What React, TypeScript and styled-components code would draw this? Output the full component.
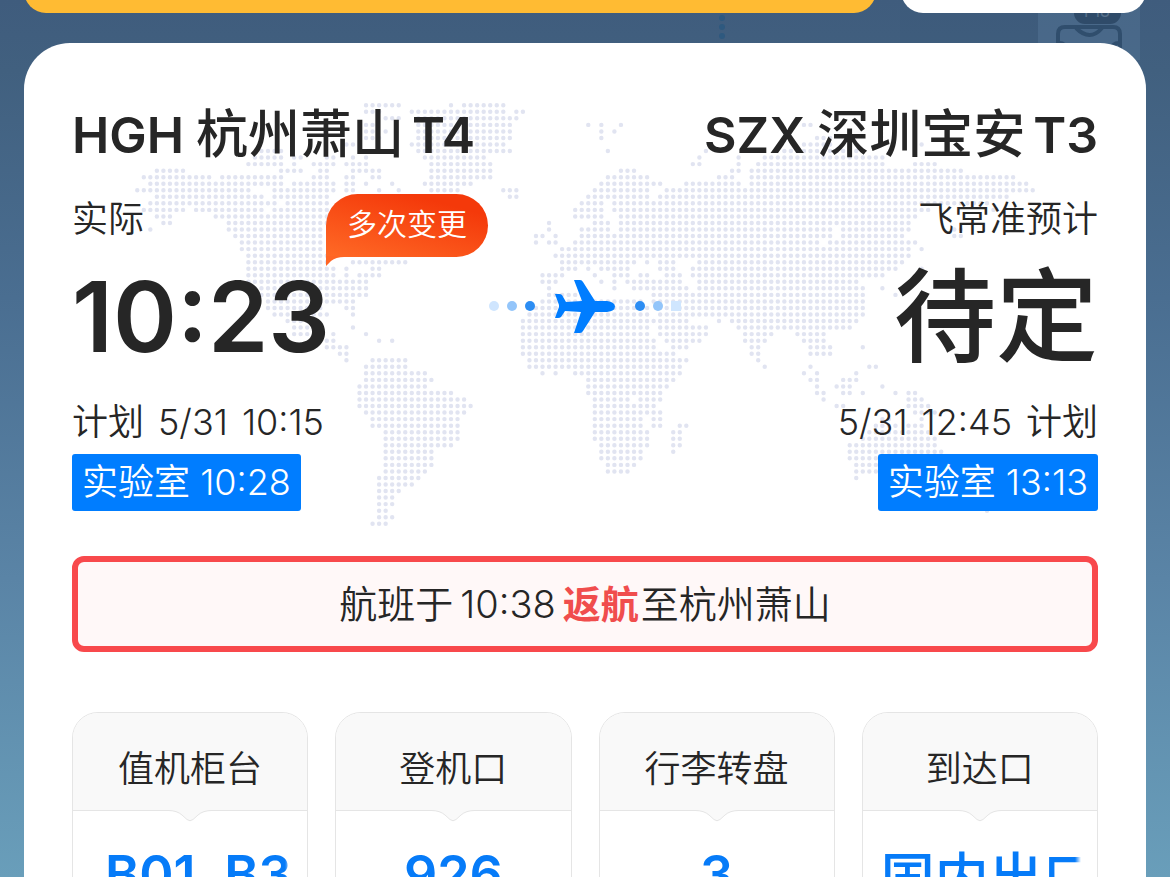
import React from "react";
import styled, { createGlobalStyle } from "styled-components";

const GlobalStyle = createGlobalStyle`
  * { box-sizing: border-box; }
  body {
    margin: 0;
    font-family: Inter, "Noto Sans CJK SC", sans-serif;
    color: #262626;
    background: #6699b8;
  }
`;

const Page = styled.main`
  position: relative;
  display: flex;
  flex-direction: column;
  height: 100vh;
  overflow: hidden;
  padding: 0 24px;
  background: linear-gradient(#3f5c7d 0%, #41607f 8%, #4a6e91 34%, #5a84a6 66%, #699eba 100%);
`;

const Backdrop = styled.svg`
  position: absolute;
  top: 0;
  right: 0;
`;

const TopBars = styled.div`
  position: relative;
  display: flex;
  align-items: flex-end;
  gap: 25px;
  height: 13px;
  flex: none;
  overflow: hidden;
`;

const Bar = styled.div<{ $grow: number; $color: string }>`
  flex: ${(p) => p.$grow} 1 0;
  height: 60px;
  border-radius: 22px;
  background: ${(p) => p.$color};
`;

const Card = styled.section`
  position: relative;
  flex: 1 0 auto;
  margin-top: 30px;
  padding: 60px 48px 0;
  border-radius: 46px 46px 0 0;
  background: #fff;
`;

const DotMap = styled.svg`
  position: absolute;
  top: 59px;
  left: 0;
  right: 0;
  margin: 0 auto;
  width: 902px;
  height: 425px;
  fill: #e1e4f1;
`;

const Route = styled.div`
  position: relative;
  display: flex;
  justify-content: space-between;
`;

const Stop = styled.div<{ $end?: boolean }>`
  display: flex;
  flex-direction: column;
  align-items: ${(p) => (p.$end ? "flex-end" : "flex-start")};
`;

const Airport = styled.h2`
  display: flex;
  align-items: baseline;
  gap: 12px;
  margin: 0;
  font-size: 52px;
  line-height: 64px;
  font-weight: 500;
`;

const Code = styled.span`
  font-size: 50px;
  font-weight: 600;
`;

const Place = styled.span`
  display: flex;
  align-items: baseline;
  gap: 8px;
`;

const Caption = styled.p`
  display: flex;
  gap: 14px;
  margin: 0;
  font-size: 36px;
  line-height: 56px;
  font-weight: 350;
`;

const StatusRow = styled.div`
  margin-top: 24px;
`;

const Time = styled.p`
  margin: 0;
  height: 147px;
  font-size: 97px;
  line-height: 140px;
  font-weight: 600;

  &:lang(zh) {
    font-size: 102px;
    font-weight: 500;
  }
`;

const Lab = styled.span`
  margin-top: 4px;
  padding: 0 10px;
  border-radius: 3px;
  background: #007dff;
  color: #fff;
  font-size: 36px;
  line-height: 57px;
  font-weight: 350;
`;

const Badge = styled.span`
  position: absolute;
  top: 91px;
  left: 254px;
  width: 162px;
  height: 63px;
  border-radius: 32px 32px 32px 0;
  background: linear-gradient(15deg, #ff6a26, #f4390a 80%);
  color: #fff;
  font-size: 30px;
  line-height: 60px;
  font-weight: 350;
  text-align: center;
`;

const BadgeTail = styled.svg`
  position: absolute;
  left: 0;
  bottom: -9px;
`;

const Flight = styled.svg`
  position: absolute;
  top: 172px;
  left: 0;
  right: 0;
  margin: 0 auto;
`;

const Notice = styled.p`
  position: relative;
  margin: 45px 0 60px;
  border: 6px solid #f8494c;
  border-radius: 12px;
  background: #fff8f8;
  font-size: 38px;
  line-height: 84px;
  text-align: center;
  font-weight: 350;
`;

const Clock = styled.time`
  margin: 0 7px;
`;

const Alert = styled.strong`
  margin-right: 2px;
  color: #f04d4d;
  font-weight: 700;
`;

const Tiles = styled.div`
  display: grid;
  grid-template-columns: repeat(4, 1fr);
  gap: 27px;
`;

const Tile = styled.article`
  height: 200px;
  border: 1px solid #e5e5e5;
  border-radius: 26px;
  overflow: hidden;
`;

const TileHead = styled.h3`
  position: relative;
  margin: 0;
  height: 98px;
  border-bottom: 1px solid #e5e5e5;
  background: #f9f9f9;
  font-size: 36px;
  line-height: 112px;
  font-weight: 350;
  text-align: center;
`;

const Notch = styled.svg`
  position: absolute;
  top: 96px;
  left: 50%;
  margin-left: -22px;
`;

const TileValue = styled.p<{ $scroll: boolean; $indent: number }>`
  margin: 28px 16px 0;
  padding-left: ${(p) => p.$indent}px;
  overflow: hidden;
  color: #067bf8;
  font-size: 52px;
  line-height: 72px;
  font-weight: 600;
  white-space: nowrap;
  text-align: ${(p) => (p.$scroll ? "left" : "center")};
  ${(p) => p.$scroll && "mask-image: linear-gradient(to left, transparent, #000 6px);"}

  &:lang(zh) {
    font-size: 54px;
    line-height: 80px;
    font-weight: 500;
  }
`;

/* Land cells of the world map, one entry per row: "from-to" column runs. */
const LAND = [
  "35-40 48 50-56", "35-37 42-56 58-59", "38-40 43-58", "35-36 43-57 69 71 74 102-103",
  "35-36 38 43-57 71 73", "35-37 43-57 71 104-106", "32-33 42-56 102-106 120",
  "19-22 43-57 72 87 99-111", "18-22 24-25 29-30 33 35 44-53 86 92 96-112 113-114",
  "17-22 24 27-30 32-35 45-54 85-86 92 95-114 119-122",
  "3-7 22-25 28-29 33-37 45-54 74-76 91-92 94-126",
  "1-11 13-22 27-29 32-33 36-37 45-54 72-78 89-91 94-134",
  "2-22 24-30 32-33 35 39 44-51 71-80 84-92 94-136",
  "0-17 21-30 32-33 37 40 45-49 56-58 70-78 81-137",
  "3-19 21-29 57-58 69-78 80-133", "2-21 23-29 68-71 73-130",
  "1-7 9-19 21-29 67-71 73-121 131", "3-5 12-29 67-71 74-119", "4-5 14-29 63 70-72 74-118",
  "2 14-28 63 68-72 74-106 108-118 125-126", "15-28 61-62 64 68-106 108-117 125-126",
  "16-28 61 63-64 67-104 106-119", "16-28 65-118 120", "17-29 64-118",
  "17-29 33-41 65-76 78 80-82 86-117", "17-30 32 36-37 65-67 69 71-75 80-82 85-116 120",
  "17-30 32 34-37 62-65 70 73-75 77-78 81-83 85-114", "17-35 62-64 71 73 75-83 86-110",
  "17-35 63 73 76-84 86-111 114", "18-35 63-69 79-84 85-111 116", "20-33 62-77 79-111",
  "20-28 32-33 61-78 80-111", "21-29 33 60-78 80-111", "23-27 59-84 89 91-110",
  "24-28 33 59-78 80-87 92-109", "24-26 30 35 59-78 80-87 93-97 101-105",
  "28-30 37 39 59-79 81-86 93-96 102-105", "29-32 59-79 82-84 94-95 103-106 111",
  "31-32 59-82 94-95 103-106", "32 36-41 60-84 95", "35-41 60-83 96 103 112-113",
  "35-44 62 64 67-83 102 104 110", "35-45 69-82 103-104 108-110", "34-44 69-81 104 107-109 114",
  "34-48 69-80 104-105 108-109 111 116 118-119", "34-50 70-75 77-80 105 118-120",
  "34-51 70-79 107-108 118-121", "35-50 70-80 119-122", "36-49 70-77 79-80 114-115 120",
  "36-49 70-77 79-80 83-84 113-116 118-120", "38-49 70-78 82-83 112-121",
  "38-49 70-78 82-83 111-122", "38-48 71-78 82-83 109-122", "38-45 71-77 82 109-123",
  "38-45 71-77 109-123", "38-45 72-76 110-123", "38-44 72-75 110-114", "37-43 110", "37-42",
  "37-40", "37-39", "37-39", "37-38 130", "37-39", "36-38",
];

const mapPath = LAND.map((row, y) =>
  row
    .split(" ")
    .map((run) => {
      const [from, to = from] = run.split("-").map(Number);
      let d = "";
      for (let x = from; x <= to; x++) d += `M${x + 0.16} ${y + 0.5}a.34 .34 0 1 0 .68 0a.34 .34 0 1 0-.68 0`;
      return d;
    })
    .join("")
).join("");

const tiles = [
  { label: "值机柜台", value: "B01, B3", lang: "en", scroll: true, indent: 16 },
  { label: "登机口", value: "926", lang: "en", scroll: false, indent: 0 },
  { label: "行李转盘", value: "3", lang: "en", scroll: false, indent: 0 },
  { label: "到达口", value: "国内出口", lang: "zh", scroll: true, indent: 2 },
];

export default function App() {
  return (
    <>
      <GlobalStyle />
      <Page>
        <Backdrop width="480" height="60" viewBox="0 0 480 60" aria-hidden="true">
          <path d="M210 0h138v60H210z" fill="#375677" opacity=".25" />
          <path d="M348 0h102v60H348z" fill="#6084a5" opacity=".28" />
          <g fill="#2e597f">
            <circle cx="32" cy="18" r="3" />
            <circle cx="32" cy="27" r="3" />
            <circle cx="32" cy="36" r="3" />
          </g>
          <rect x="384" y="0" width="47" height="24" rx="11" fill="#2f4b69" />
          <text x="407" y="17" fontSize="16" fill="#57718c" textAnchor="middle">F18</text>
          <g fill="none" stroke="#304e6d" strokeWidth="4">
            <path d="M368 60V34q0-7 7-7h48q7 0 7 7v26" />
            <path d="M386 28q14 14 26 0M369 43q7 0 9 8M429 43q-7 0-9 8" />
          </g>
        </Backdrop>
        <TopBars>
          <Bar $grow={852} $color="#ffbb33" />
          <Bar $grow={245} $color="#fff" />
        </TopBars>
        <Card>
          <DotMap viewBox="0 0 138 65" preserveAspectRatio="none" aria-hidden="true">
            <path d={mapPath} />
          </DotMap>
          <Route>
            <Stop>
              <Airport>
                <Code>HGH</Code>
                <Place>杭州萧山<Code>T4</Code></Place>
              </Airport>
              <StatusRow>
                <Caption>实际</Caption>
              </StatusRow>
              <Time lang="en">10:23</Time>
              <Caption>
                <span>计划</span>
                <span>5/31</span>
                <span>10:15</span>
              </Caption>
              <Lab>实验室 10:28</Lab>
            </Stop>
            <Badge>
              多次变更
              <BadgeTail width="18" height="10" viewBox="0 0 18 10" aria-hidden="true">
                <path d="M0 0h18v1Q10 1 5 5L0 10z" fill="#ff6524" />
              </BadgeTail>
            </Badge>
            <Flight width="192" height="62" viewBox="0 0 192 62" aria-hidden="true">
              <circle cx="5" cy="31" r="5" fill="#cfe5fe" />
              <circle cx="23" cy="31" r="5" fill="#93c5fa" />
              <circle cx="41" cy="31" r="5" fill="#2c8df3" />
              <circle cx="151" cy="31" r="5" fill="#2c8df3" />
              <circle cx="169" cy="31" r="5" fill="#93c5fa" />
              <path d="M182 26h10v10h-10z" fill="#d0e6fe" />
              <path
                d="M85 5h6q2 0 3 2l12 19h12q8 1 8 5.500t-8 5.500h-12L94 56q-1 2-3 2h-6l7-21-16-1-4 6q-1 1-3 1h-3l4-11v-2l-4-11h4q2 0 3 1l4 7 16-1z"
                fill="#007dff"
              />
            </Flight>
            <Stop $end>
              <Airport>
                <Code>SZX</Code>
                <Place>深圳宝安<Code>T3</Code></Place>
              </Airport>
              <StatusRow>
                <Caption>飞常准预计</Caption>
              </StatusRow>
              <Time lang="zh">待定</Time>
              <Caption>
                <span>5/31</span>
                <span>12:45</span>
                <span>计划</span>
              </Caption>
              <Lab>实验室 13:13</Lab>
            </Stop>
          </Route>
          <Notice>
            航班于<Clock>10:38</Clock>
            <Alert>返航</Alert>至杭州萧山
          </Notice>
          <Tiles>
            {tiles.map((t) => (
              <Tile key={t.label}>
                <TileHead>
                  {t.label}
                  <Notch width="44" height="14" viewBox="0 0 44 14" aria-hidden="true">
                    <path d="M0 0V1.500Q9 1.500 14 6L19 10.500Q22 13 25 10.500L30 6Q35 1.500 44 1.500V0z" fill="#f9f9f9" />
                    <path d="M0 1.500Q9 1.500 14 6L19 10.500Q22 13 25 10.500L30 6Q35 1.500 44 1.500" fill="none" stroke="#e5e5e5" />
                  </Notch>
                </TileHead>
                <TileValue lang={t.lang} $scroll={t.scroll} $indent={t.indent}>
                  {t.value}
                </TileValue>
              </Tile>
            ))}
          </Tiles>
        </Card>
      </Page>
    </>
  );
}
